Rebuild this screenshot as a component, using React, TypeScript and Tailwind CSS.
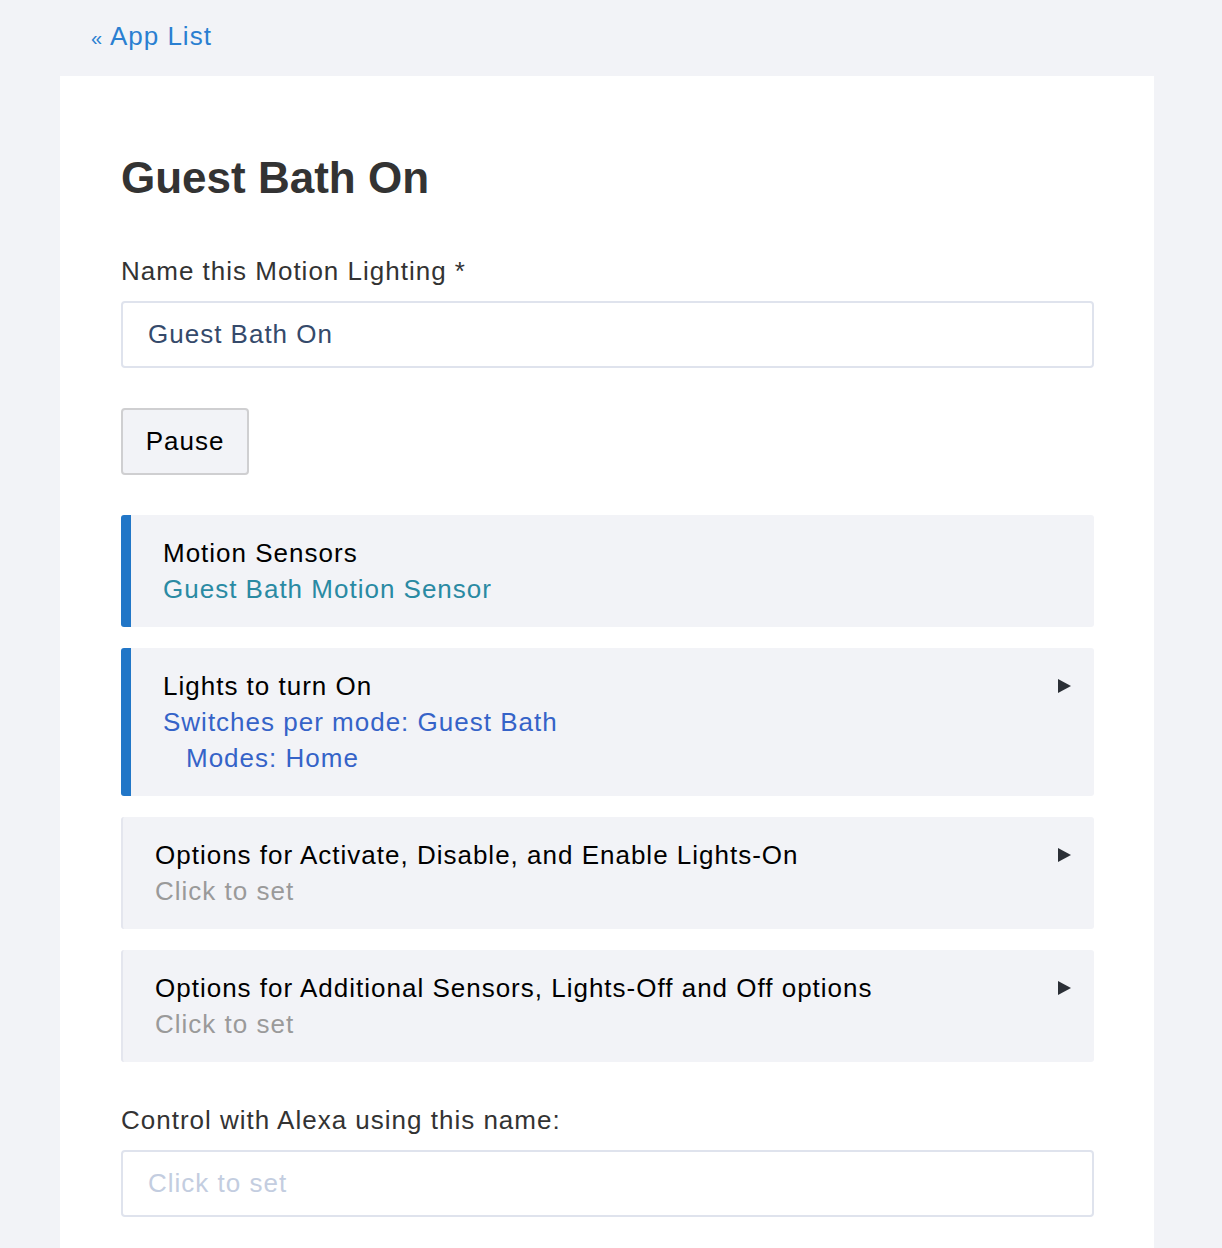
const font = { fontFamily: '"Liberation Sans", Arial, sans-serif' };

const Arrow = () => (
  <svg width="15" height="16" viewBox="0 0 15 16" className="mt-[10px] shrink-0">
    <polygon points="1,1 14,8 1,15" fill="#2b2f36" />
  </svg>
);

type SectionProps = {
  title: string;
  active?: boolean;
  arrow?: boolean;
  children: React.ReactNode;
};

const Section = ({ title, active, arrow, children }: SectionProps) => (
  <div
    className={
      'flex items-start justify-between rounded-[3px] bg-[#f2f3f7] py-[20px] pr-[22px] ' +
      (active ? 'border-l-[10px] border-[#2176c7] pl-[32px]' : 'border-l-2 border-[#e4e6ee] pl-[32px]')
    }
  >
    <div className="text-[26px] leading-[36px] tracking-[1px]">
      <div className="text-black">{title}</div>
      {children}
    </div>
    {arrow && <Arrow />}
  </div>
);

export default function App() {
  return (
    <div className="min-h-[1248px] bg-[#f2f3f7]" style={font}>
      <div className="h-[76px] px-[91px] pt-[18px]">
        <a className="text-[26px] leading-[36px] tracking-[1px] text-[#2a7fd1]">
          <span className="text-[20px]">«</span> App List
        </a>
      </div>
      <div className="ml-[60px] mr-[68px] bg-white pl-[61px] pr-[60px] pt-[74px] pb-[40px]">
        <h1 className="text-[44px] leading-[56px] font-bold text-[#333333]">Guest Bath On</h1>

        <div className="mt-[47px] text-[26px] leading-[36px] tracking-[1px] text-[#333333]">
          Name this Motion Lighting *
        </div>
        <div className="mt-[12px] flex h-[67px] items-center rounded-[4px] border-2 border-[#dfe3ed] px-[25px] text-[26px] tracking-[1px] text-[#354a6b]">
          Guest Bath On
        </div>

        <button className="mt-[40px] h-[67px] w-[128px] rounded-[4px] border-2 border-[#cfcfd1] bg-[#f2f3f7] text-[26px] tracking-[1px] text-black">
          Pause
        </button>

        <div className="mt-[40px] flex flex-col gap-[21px]">
          <Section title="Motion Sensors" active>
            <div className="text-[#2a8aa3]">Guest Bath Motion Sensor</div>
          </Section>
          <Section title="Lights to turn On" active arrow>
            <div className="text-[#3563c8]">Switches per mode: Guest Bath</div>
            <div className="pl-[23px] text-[#3563c8]">Modes: Home</div>
          </Section>
          <Section title="Options for Activate, Disable, and Enable Lights-On" arrow>
            <div className="text-[#9a9a9a]">Click to set</div>
          </Section>
          <Section title="Options for Additional Sensors, Lights-Off and Off options" arrow>
            <div className="text-[#9a9a9a]">Click to set</div>
          </Section>
        </div>

        <div className="mt-[40px] text-[26px] leading-[36px] tracking-[1px] text-[#333333]">
          Control with Alexa using this name:
        </div>
        <div className="mt-[12px] flex h-[67px] items-center rounded-[4px] border-2 border-[#dfe3ed] px-[25px] text-[26px] tracking-[1px] text-[#c3cde0]">
          Click to set
        </div>
      </div>
    </div>
  );
}
